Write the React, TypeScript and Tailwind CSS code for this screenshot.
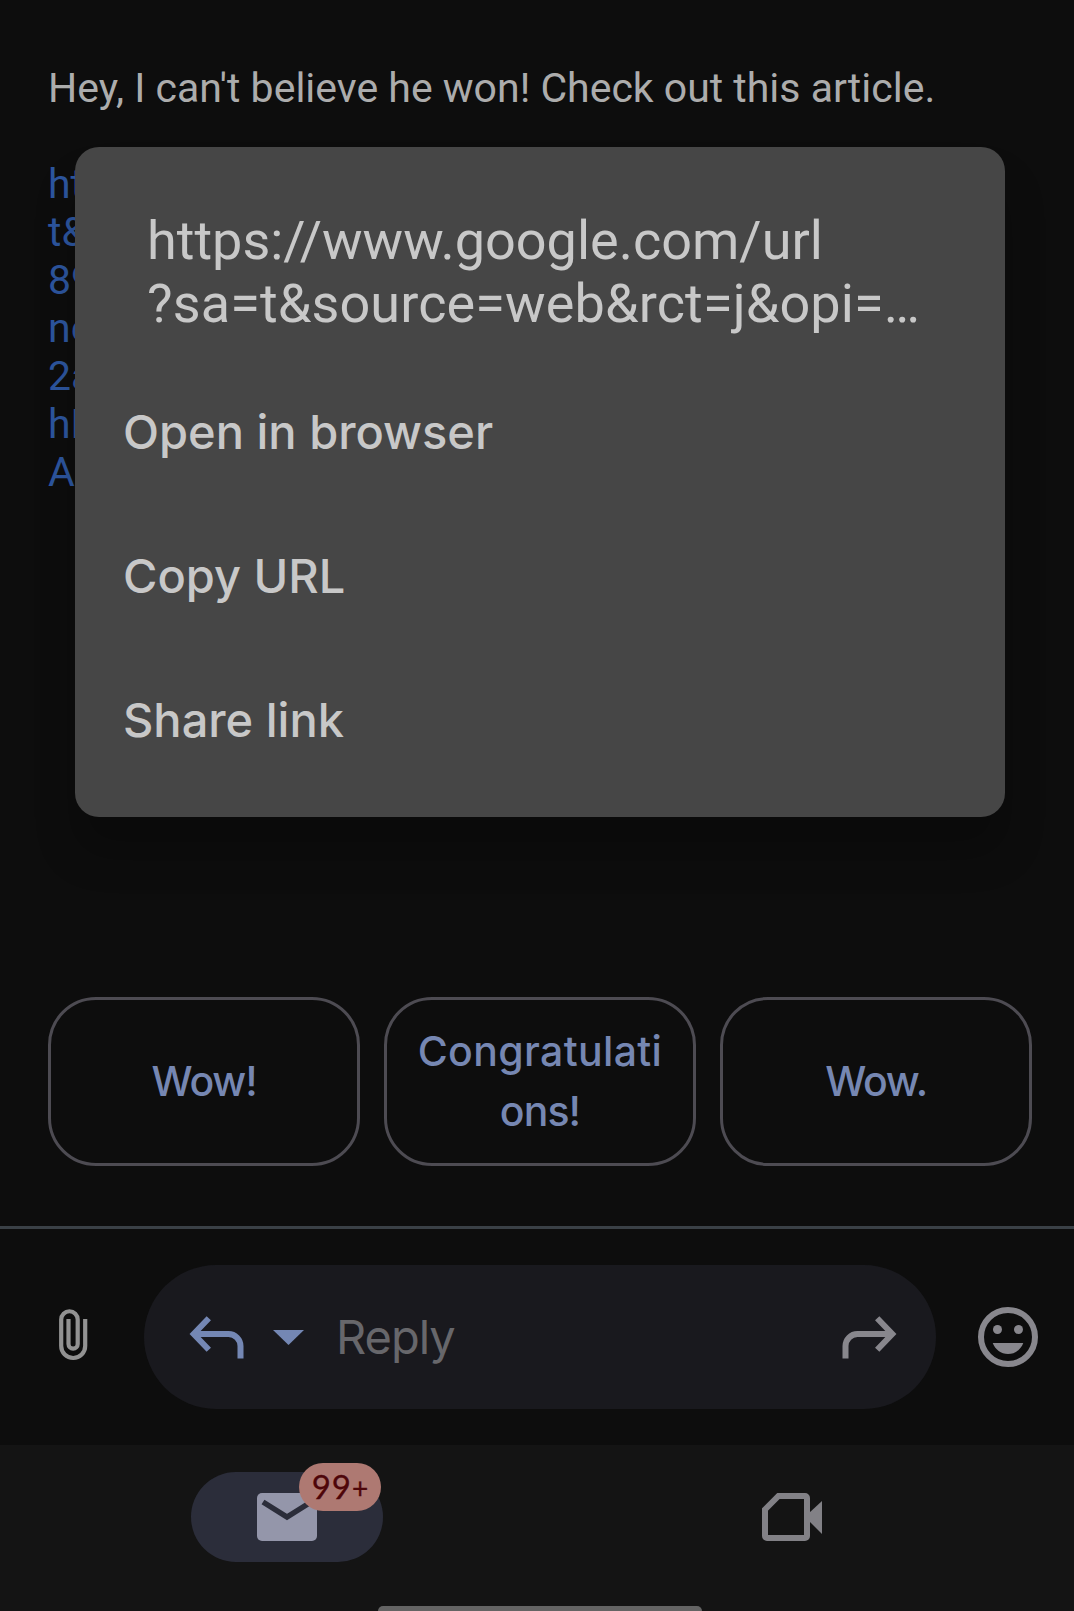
const linkLines = ["ht", "t&", "89", "ne", "2a", "hL", "A"];

const menuItems = ["Open in browser", "Copy URL", "Share link"];

function LinkMenu() {
  return (
    <div className="absolute left-[75px] top-[147px] flex h-[670px] w-[930px] flex-col rounded-[24px] bg-[#464646] pt-[62px] text-[#c8c8c8] shadow-[0_36px_40px_0_rgba(0,0,0,0.22)]">
      <div className="h-[151px] whitespace-nowrap pl-[72px] text-[54px] leading-[63px]">
        <div>https://www.google.com/url</div>
        <div className="tracking-[0.13px]">?sa=t&amp;source=web&amp;rct=j&amp;opi=…</div>
      </div>
      {menuItems.map((label) => (
        <button
          key={label}
          className="flex h-36 items-center pl-12 text-left font-['Inter',sans-serif] text-[47px] font-medium"
        >
          {label}
        </button>
      ))}
    </div>
  );
}

function Message() {
  return (
    <section className="relative h-[997px] px-12 pt-16 text-[41px] leading-[48px]">
      <p className="whitespace-nowrap text-[#acacac]">Hey, I can't believe he won! Check out this article.</p>
      <div className="mt-12 w-[60px] whitespace-nowrap text-[#2d569f]">
        {linkLines.map((line) => (
          <div key={line}>{line}</div>
        ))}
      </div>
      <LinkMenu />
    </section>
  );
}

const chip =
  "flex h-[169px] w-[312px] shrink-0 flex-col items-center justify-center rounded-[48px] border-[3px] border-[#4d4b52] pb-[2px]";

function SmartReplies() {
  return (
    <section className="flex h-[229px] gap-6 pl-12 font-['Inter',sans-serif] text-[41px] font-medium leading-[60px] text-[#7687b2]">
      <button className={chip}>
        <span className="tracking-[-1.2px]">Wow!</span>
      </button>
      <button className={chip}>
        <span className="tracking-[0.35px]">Congratulati</span>
        <span className="tracking-[-0.9px]">ons!</span>
      </button>
      <button className={chip}>
        <span className="tracking-[-1.2px]">Wow.</span>
      </button>
    </section>
  );
}

function ReplyBar() {
  return (
    <section className="flex h-[219px] items-center border-t-[3px] border-[#3a4046]">
      <div className="flex w-36 justify-center">
        <svg className="h-[72px] w-[72px]" viewBox="0 0 72 72" fill="none" stroke="#929292" strokeWidth="4.2">
          <path d="M49.200 18v27a12 12 0 0 1-24 0V18.500a8.250 8.250 0 0 1 16.500 0V43a4.600 4.600 0 0 1-9.200 0V18" />
        </svg>
      </div>
      <div className="flex h-36 w-[792px] items-center rounded-full bg-[#19191e]">
        <svg className="ml-9 h-[72px] w-[72px]" viewBox="0 0 72 72" fill="none" stroke="#7487b4" strokeWidth="6">
          <path d="M28.800 17.200 13.700 33l15.100 15.800M13.700 33h34.800a12 12 0 0 1 12 12v12.500" />
        </svg>
        <svg className="ml-[21px] h-[15px] w-[31px]" viewBox="0 0 31 15">
          <path d="M0 0h31L15.500 15z" fill="#7487b4" />
        </svg>
        <span className="ml-8 font-['Inter',sans-serif] text-[47px] leading-[60px] tracking-[-1px] text-[#67676b]">
          Reply
        </span>
        <svg className="ml-auto mr-[30px] h-[72px] w-[72px]" viewBox="0 0 72 72" fill="none" stroke="#88878d" strokeWidth="6">
          <path d="M43.200 17.200 58.300 33 43.200 48.800M58.300 33H23.500a12 12 0 0 0-12 12v12.500" />
        </svg>
      </div>
      <svg className="ml-9 h-[72px] w-[72px]" viewBox="0 0 72 72" fill="#88878d">
        <circle cx="36" cy="36" r="27" fill="none" stroke="#88878d" strokeWidth="6" />
        <circle cx="25.5" cy="28.5" r="4.5" />
        <circle cx="46.5" cy="28.5" r="4.5" />
        <path d="M20.700 42h30.600c-2.400 6.500-8.400 11-15.300 11s-12.900-4.500-15.300-11z" />
      </svg>
    </section>
  );
}

function BottomNav() {
  return (
    <nav className="relative flex h-[166px] bg-[#141414] pt-[27px]">
      <div className="flex w-[574px] justify-center">
        <div className="relative flex h-[90px] w-48 items-center justify-center rounded-full bg-[#2b2d3a]">
          <svg className="h-12 w-[60px]" viewBox="0 0 60 48">
            <rect width="60" height="48" rx="5" fill="#9496aa" />
            <path d="M6 9l24 15L54 9" fill="none" stroke="#2b2d3a" strokeWidth="5.5" />
          </svg>
          <div className="absolute left-[108px] top-[-9px] flex h-12 w-[82px] items-center justify-center rounded-full bg-[#ae7972] font-['Lato',sans-serif] text-[33px] tracking-[1px] text-[#4e060a] [-webkit-text-stroke:0.3px_#4e060a]">
            99<span className="pt-[2px] text-[28px] leading-[33px] tracking-normal">+</span>
          </div>
        </div>
      </div>
      <div className="flex h-[90px] w-[436px] items-center justify-center">
        <svg className="h-12 w-[60px]" viewBox="0 0 60 48" fill="#828186">
          <path
            d="M3 16.500 16.500 3H43a2 2 0 0 1 2 2v38a2 2 0 0 1-2 2H5a2 2 0 0 1-2-2z"
            fill="none"
            stroke="#828186"
            strokeWidth="6"
          />
          <path d="M47 20 60 8v33L47 28z" />
        </svg>
      </div>
      <div className="absolute bottom-0 left-[378px] h-[5px] w-[324px] rounded-t-[5px] bg-[#646464]" />
    </nav>
  );
}

export default function App() {
  return (
    <main className="h-[1611px] w-[1074px] overflow-hidden bg-[#0d0d0d] font-['Roboto',sans-serif]">
      <Message />
      <SmartReplies />
      <ReplyBar />
      <BottomNav />
    </main>
  );
}
